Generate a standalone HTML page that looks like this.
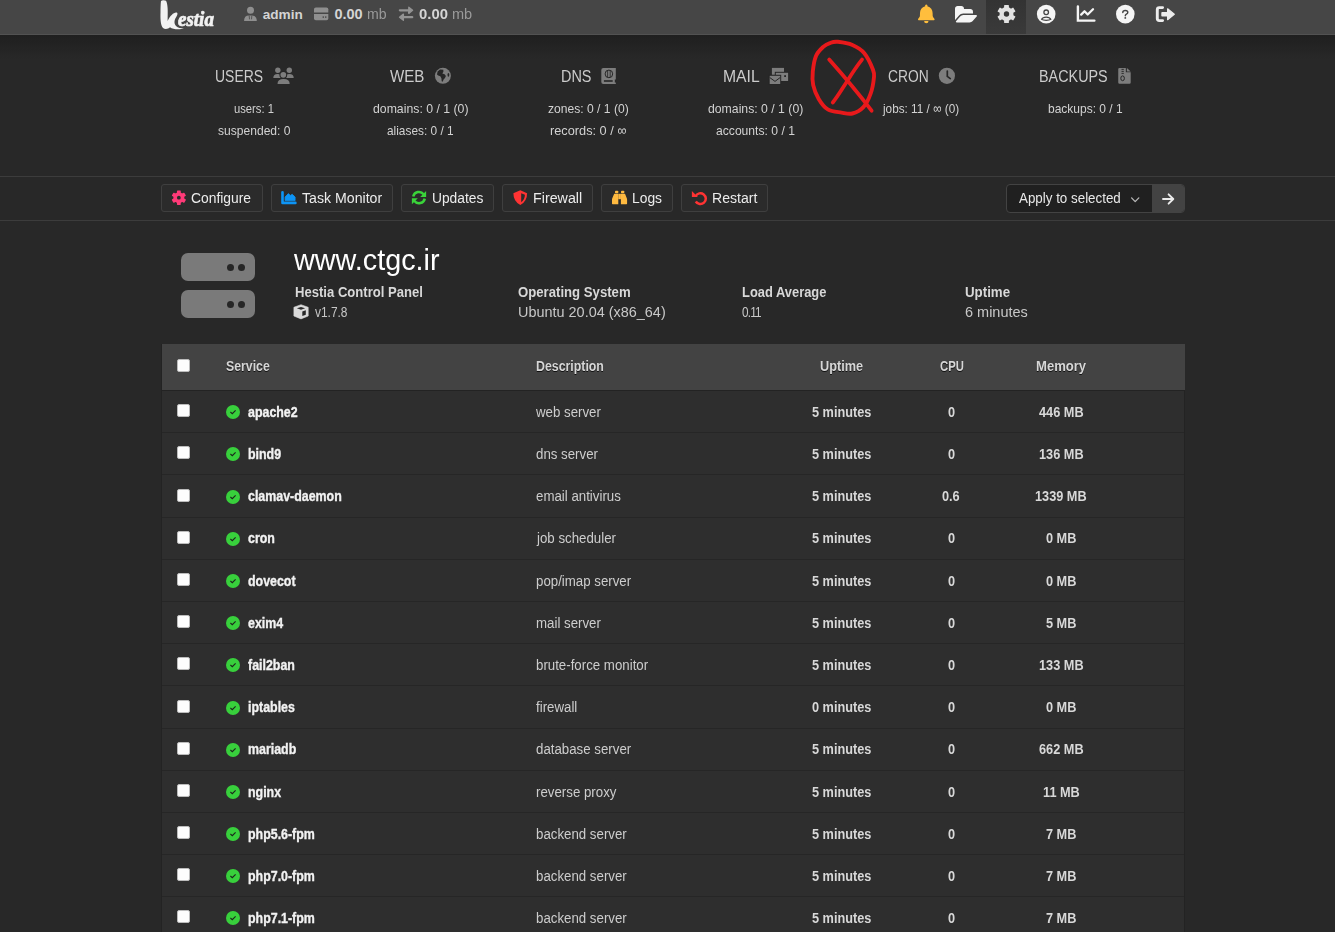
<!DOCTYPE html>
<html><head><meta charset="utf-8"><style>
*{box-sizing:border-box;margin:0;padding:0}
html,body{width:1335px;height:932px;overflow:hidden}
body{background:#282828;font-family:"Liberation Sans",sans-serif;position:relative}
.t{position:absolute;white-space:nowrap;line-height:1;transform-origin:0 0}
.ic{position:absolute;overflow:visible}
.b{position:absolute}
</style></head><body>
<div class="b" style="left:0;top:0;width:1335px;height:34px;background:#464646"></div>
<div class="b" style="left:0;top:34px;width:1335px;height:1px;background:#525252"></div>
<div class="b" style="left:0;top:35px;width:1335px;height:24px;background:linear-gradient(#1f1f1f,#282828)"></div>
<div class="b" style="left:986px;top:0;width:40px;height:34px;background:linear-gradient(#333,#3a3a3a)"></div>
<svg class="ic" style="left:0;top:0;width:240px;height:34px" viewBox="0 0 240 34"><path fill="#f2f2f2" d="M161,1 C162,0 165,0 166,0.8 C167.8,4 168,10 167.6,21 C170,16 173.5,12.5 176,12.5 C178,12.5 177.8,14.5 176.5,16.5 C174.5,19.5 173.5,23 176,26 C178,28 181,28.3 184,28.5 C180,29.7 173,29.7 170,27.3 C168,29.2 165,29.5 163,28 C160.5,25.5 160.3,18 160.5,12 C160.6,6 160.7,3 161,1 Z"/></svg>
<div class="t" style="left:178px;top:8.57px;font-size:20px;color:#f2f2f2;font-family:'Liberation Serif';font-style:italic;font-weight:bold;transform:scaleX(0.95);-webkit-text-stroke:0.7px #f2f2f2">estia</div>
<svg class="ic" style="left:0;top:0;width:300px;height:34px" viewBox="0 0 300 34"><circle cx="250.5" cy="10.2" r="3.5" fill="#8f8f8f"/><path d="M244.1 21 Q244.1 15.6 249 15.6 H252 Q256.8 15.6 256.8 21 Z" fill="#8f8f8f"/><path d="M249.2 15.6 L249.5 19.3 M251.8 15.6 L251.5 19.3" stroke="#464646" stroke-width="0.8"/></svg>
<div class="t" style="left:262.70px;top:7.69px;font-size:13.6px;color:#d4d4d4;font-weight:bold;">admin</div>
<div class="t" style="left:334.40px;top:6.73px;font-size:14.5px;color:#d4d4d4;font-weight:bold;">0.00</div>
<div class="t" style="left:367.40px;top:7.15px;font-size:14px;color:#9a9a9a;transform:scaleX(1.0079);">mb</div>
<svg class="ic" style="left:0;top:0;width:500px;height:34px" viewBox="0 0 500 34"><g fill="#939393" stroke="#939393" stroke-linejoin="round" stroke-linecap="round"><path d="M399.9 10.3 H409.5" stroke-width="2.3" fill="none"/><path d="M408.8 7.2 L412.6 10.3 L408.8 13.4 Z" stroke-width="1.3"/><path d="M403 17.2 H412.2" stroke-width="2.3" fill="none"/><path d="M403.4 14.1 L399.5 17.2 L403.4 20.3 Z" stroke-width="1.3"/></g></svg>
<div class="t" style="left:419.30px;top:6.73px;font-size:14.5px;color:#d4d4d4;font-weight:bold;transform:scaleX(1.0242);">0.00</div>
<div class="t" style="left:452.30px;top:7.15px;font-size:14px;color:#9a9a9a;transform:scaleX(1.0388);">mb</div>
<svg class="ic" style="left:0;top:0;width:1335px;height:34px" viewBox="0 0 1335 34"><path d="M926.3 4.6 C927.2 4.6 927.6 5.4 927.4 6.3 C930.8 7 932.6 9.8 932.6 13 L932.7 16.1 C932.9 17.5 934.3 18.4 934.6 19.2 C934.6 19.9 934.2 20.2 933.6 20.2 H919 C918.4 20.2 918 19.9 918 19.2 C918.3 18.4 919.7 17.5 919.9 16.1 L920 13 C920 9.8 921.8 7 925.2 6.3 C925 5.4 925.4 4.6 926.3 4.6 Z" fill="#ffbe3d"/><path d="M924.1 21.1 A2.2 2.2 0 0 0 928.5 21.1 Z" fill="#ffbe3d"/></svg>
<svg class="ic" style="left:955px;top:6px;width:22px;height:16.5px" viewBox="0 -1408 1879 1408" preserveAspectRatio="none"><path fill="#f5f5f5" transform="scale(1,-1)" d="M1879 584q0 -31 -31 -66l-336 -396q-43 -51 -120.5 -86.5t-143.5 -35.5h-1088q-34 0 -60.5 13t-26.5 43q0 31 31 66l336 396q43 51 120.5 86.5t143.5 35.5h1088q34 0 60.5 -13t26.5 -43zM1536 928v-160h-832q-94 0 -197 -47.5t-164 -119.5l-337 -396l-5 -6q0 4 -0.5 12.5
t-0.5 12.5v960q0 92 66 158t158 66h320q92 0 158 -66t66 -158v-32h544q92 0 158 -66t66 -158z"/></svg>
<svg class="ic" style="left:0;top:0;width:1335px;height:34px" viewBox="0 0 1335 34"><circle cx="1125.3" cy="14.1" r="9.3" fill="#f5f5f5"/><path d="M1122.8 12.4 Q1122.8 10.4 1125.3 10.4 Q1127.8 10.4 1127.8 12.2 Q1127.8 13.5 1126.4 14.2 Q1125.3 14.8 1125.3 15.8" fill="none" stroke="#464646" stroke-width="1.45" stroke-linecap="round"/><circle cx="1125.3" cy="17.9" r="0.95" fill="#464646"/></svg>
<svg class="ic" style="left:0;top:0;width:1335px;height:34px" viewBox="0 0 1335 34"><path d="M1162.6 7.6 H1159.3 Q1157.3 7.6 1157.3 9.6 V18.6 Q1157.3 20.6 1159.3 20.6 H1162.6" fill="none" stroke="#ececec" stroke-width="2.9" stroke-linecap="round"/><rect x="1161.3" y="12.1" width="6.5" height="4.4" rx="0.8" fill="#ececec"/><path d="M1167.6 8.8 L1174.3 14.3 L1167.6 19.7 Z" fill="#ececec" stroke="#ececec" stroke-width="1.2" stroke-linejoin="round"/></svg>
<div class="t" style="left:215.00px;top:68.27px;font-size:17.4px;color:#cbcbcb;transform:scaleX(0.8024);">USERS</div>
<div class="t" style="left:234.30px;top:101.97px;font-size:13.5px;color:#d2d2d2;transform:scaleX(0.8309);">users: 1</div>
<div class="t" style="left:217.60px;top:123.87px;font-size:13.5px;color:#d2d2d2;transform:scaleX(0.8943);">suspended: 0</div>
<div class="t" style="left:390.00px;top:68.27px;font-size:17.4px;color:#cbcbcb;transform:scaleX(0.8679);">WEB</div>
<div class="t" style="left:372.70px;top:101.97px;font-size:13.5px;color:#d2d2d2;transform:scaleX(0.9091);">domains: 0 / 1 (0)</div>
<div class="t" style="left:387.00px;top:123.87px;font-size:13.5px;color:#d2d2d2;transform:scaleX(0.8788);">aliases: 0 / 1</div>
<div class="t" style="left:560.90px;top:68.27px;font-size:17.4px;color:#cbcbcb;transform:scaleX(0.8304);">DNS</div>
<div class="t" style="left:547.60px;top:101.97px;font-size:13.5px;color:#d2d2d2;transform:scaleX(0.8962);">zones: 0 / 1 (0)</div>
<div class="t" style="left:549.70px;top:123.87px;font-size:13.5px;color:#d2d2d2;transform:scaleX(0.9443);">records: 0 / ∞</div>
<div class="t" style="left:722.50px;top:68.27px;font-size:17.4px;color:#cbcbcb;transform:scaleX(0.9037);">MAIL</div>
<div class="t" style="left:707.70px;top:101.97px;font-size:13.5px;color:#d2d2d2;transform:scaleX(0.9072);">domains: 0 / 1 (0)</div>
<div class="t" style="left:715.90px;top:123.87px;font-size:13.5px;color:#d2d2d2;transform:scaleX(0.8986);">accounts: 0 / 1</div>
<div class="t" style="left:887.90px;top:68.27px;font-size:17.4px;color:#cbcbcb;transform:scaleX(0.7945);">CRON</div>
<div class="t" style="left:883.09px;top:101.97px;font-size:13.5px;color:#d2d2d2;transform:scaleX(0.8707);">jobs: 11 / ∞ (0)</div>
<div class="t" style="left:1039.40px;top:68.27px;font-size:17.4px;color:#cbcbcb;transform:scaleX(0.8262);">BACKUPS</div>
<div class="t" style="left:1047.60px;top:101.97px;font-size:13.5px;color:#d2d2d2;transform:scaleX(0.8887);">backups: 0 / 1</div>
<svg class="ic" style="left:0;top:0;width:1335px;height:932px" viewBox="0 0 1335 932"><path d="M837.8 41.8 C841.4 42.2 848.0 43.1 852.4 45.0 C856.8 46.9 860.9 49.1 864.3 53.2 C867.7 57.3 871.4 65.6 873.0 69.7 C874.6 73.8 874.3 74.0 873.9 77.9 C873.5 81.9 872.5 88.5 870.7 93.4 C869.0 98.3 866.5 103.8 863.4 107.1 C860.3 110.4 856.0 112.6 852.4 113.5 C848.8 114.4 845.6 113.3 841.5 112.6 C837.4 111.9 831.6 111.7 827.8 109.4 C824.0 107.1 821.1 102.9 818.7 98.9 C816.3 94.9 814.2 89.8 813.2 85.2 C812.2 80.6 812.3 76.4 812.8 71.5 C813.3 66.6 814.3 60.1 816.0 56.0 C817.7 51.9 820.8 49.1 823.2 46.9 C825.6 44.7 828.1 43.6 830.5 42.8 C832.9 41.9 834.1 41.4 837.8 41.8 Z" fill="none" stroke="#e8191b" stroke-width="3.9" stroke-linecap="round" stroke-linejoin="round"/><path d="M829.2 59.6 C842 74 858 93 871.6 110.7" fill="none" stroke="#e8191b" stroke-width="3.8" stroke-linecap="round"/><path d="M862 59.6 C856 67 851 75 847 81.5 C842 89 838 96 832.8 102.5" fill="none" stroke="#e8191b" stroke-width="3.8" stroke-linecap="round"/></svg>
<div class="b" style="left:0;top:176px;width:1335px;height:1px;background:#3c3c3c"></div>
<div class="b" style="left:0;top:220px;width:1335px;height:1px;background:#3c3c3c"></div>
<div class="b" style="left:161px;top:184px;width:102px;height:28px;border:1px solid #3f3f3f;border-radius:3px;background:#2b2b2b"></div>
<div class="t" style="left:191.20px;top:189.93px;font-size:15.2px;color:#ececec;transform:scaleX(0.9119);">Configure</div>
<div class="b" style="left:271px;top:184px;width:122px;height:28px;border:1px solid #3f3f3f;border-radius:3px;background:#2b2b2b"></div>
<div class="t" style="left:301.80px;top:189.93px;font-size:15.2px;color:#ececec;transform:scaleX(0.9309);">Task Monitor</div>
<div class="b" style="left:401px;top:184px;width:93px;height:28px;border:1px solid #3f3f3f;border-radius:3px;background:#2b2b2b"></div>
<div class="t" style="left:431.70px;top:189.93px;font-size:15.2px;color:#ececec;transform:scaleX(0.9078);">Updates</div>
<div class="b" style="left:502px;top:184px;width:91px;height:28px;border:1px solid #3f3f3f;border-radius:3px;background:#2b2b2b"></div>
<div class="t" style="left:533.00px;top:189.93px;font-size:15.2px;color:#ececec;transform:scaleX(0.9396);">Firewall</div>
<div class="b" style="left:601px;top:184px;width:72px;height:28px;border:1px solid #3f3f3f;border-radius:3px;background:#2b2b2b"></div>
<div class="t" style="left:632.00px;top:189.93px;font-size:15.2px;color:#ececec;transform:scaleX(0.9104);">Logs</div>
<div class="b" style="left:681px;top:184px;width:87px;height:28px;border:1px solid #3f3f3f;border-radius:3px;background:#2b2b2b"></div>
<div class="t" style="left:711.50px;top:189.93px;font-size:15.2px;color:#ececec;transform:scaleX(0.9267);">Restart</div>
<div class="b" style="left:1006px;top:184px;width:179px;height:29px;border:1px solid #434343;border-radius:4px;background:#202020"></div>
<div class="b" style="left:1152px;top:185px;width:32px;height:27px;border-radius:0 3px 3px 0;background:#434343"></div>
<div class="t" style="left:1019.20px;top:191.03px;font-size:14.5px;color:#e8e8e8;transform:scaleX(0.9218);">Apply to selected</div>
<svg class="ic" style="left:0;top:0;width:1335px;height:932px" viewBox="0 0 1335 932"><path d="M1131.6 197.9 L1135.2 201.6 L1138.8 197.9" fill="none" stroke="#b8b8b8" stroke-width="1.3" stroke-linecap="round" stroke-linejoin="round"/><path d="M1163 199 H1173.2 M1168.6 194.3 L1173.3 199 L1168.6 203.7" fill="none" stroke="#ececec" stroke-width="1.9" stroke-linecap="round" stroke-linejoin="round"/></svg>
<div class="b" style="left:180.5px;top:253px;width:74px;height:27.5px;border-radius:7px;background:#7a7a7a"></div>
<div class="b" style="left:226.5px;top:263.5px;width:7px;height:7px;border-radius:50%;background:#262626"></div>
<div class="b" style="left:237.5px;top:263.5px;width:7px;height:7px;border-radius:50%;background:#262626"></div>
<div class="b" style="left:180.5px;top:290px;width:74px;height:27.5px;border-radius:7px;background:#7a7a7a"></div>
<div class="b" style="left:226.5px;top:300.5px;width:7px;height:7px;border-radius:50%;background:#262626"></div>
<div class="b" style="left:237.5px;top:300.5px;width:7px;height:7px;border-radius:50%;background:#262626"></div>
<div class="t" style="left:294.26px;top:245.75px;font-size:29px;color:#ffffff;transform:scaleX(0.9926);">www.ctgc.ir</div>
<div class="t" style="left:294.80px;top:285.35px;font-size:14px;color:#d8d8d8;font-weight:bold;transform:scaleX(0.9341);">Hestia Control Panel</div>
<svg class="ic" style="left:0;top:0;width:400px;height:340px" viewBox="0 0 400 340"><path d="M301 304.7 L308.2 307.3 V316 L301 318.9 L293.9 316 V307.3 Z" fill="#dadada" stroke="#dadada" stroke-width="0.6" stroke-linejoin="round"/><path d="M296.9 308.3 L301 306.9 L305.1 308.3 L301 309.7 Z" fill="#282828"/><path d="M302.3 311.5 L305.8 310.2 V314.7 L302.3 316 Z" fill="#282828"/></svg>
<div class="t" style="left:314.70px;top:304.65px;font-size:14px;color:#c8c8c8;transform:scaleX(0.8522);">v1.7.8</div>
<div class="t" style="left:517.70px;top:285.35px;font-size:14px;color:#d8d8d8;font-weight:bold;transform:scaleX(0.9398);">Operating System</div>
<div class="t" style="left:517.70px;top:306.03px;font-size:13.9px;color:#c8c8c8;transform:scaleX(1.0394);">Ubuntu 20.04 (x86_64)</div>
<div class="t" style="left:741.50px;top:285.35px;font-size:14px;color:#d8d8d8;font-weight:bold;transform:scaleX(0.9219);">Load Average</div>
<div class="t" style="left:741.50px;top:305.05px;font-size:14px;color:#c8c8c8;transform:scaleX(0.8400);letter-spacing:-1px;">0.11</div>
<div class="t" style="left:964.90px;top:285.35px;font-size:14px;color:#d8d8d8;font-weight:bold;transform:scaleX(0.9506);">Uptime</div>
<div class="t" style="left:964.90px;top:306.03px;font-size:13.9px;color:#c8c8c8;transform:scaleX(1.0422);">6 minutes</div>
<div class="b" style="left:161px;top:343.5px;width:1024px;height:600px;background:#232323"></div>
<div class="b" style="left:162px;top:391px;width:1022px;height:600px;background:#2e2e2e"></div>
<div class="b" style="left:161.5px;top:343.5px;width:1023px;height:46.5px;background:#434343"></div>
<div class="b" style="left:177px;top:359.2px;width:12.5px;height:12.5px;border-radius:2px;background:#fdfdfd;border:1px solid #bcbcbc"></div>
<div class="t" style="left:226.40px;top:358.83px;font-size:14.5px;color:#d6d6d6;font-weight:bold;transform:scaleX(0.8487);text-shadow:0 1px 0 rgba(0,0,0,0.75);">Service</div>
<div class="t" style="left:536.30px;top:358.83px;font-size:14.5px;color:#d6d6d6;font-weight:bold;transform:scaleX(0.8513);text-shadow:0 1px 0 rgba(0,0,0,0.75);">Description</div>
<div class="t" style="left:819.85px;top:358.83px;font-size:14.5px;color:#d6d6d6;font-weight:bold;transform:scaleX(0.8771);text-shadow:0 1px 0 rgba(0,0,0,0.75);">Uptime</div>
<div class="t" style="left:939.80px;top:358.83px;font-size:14.5px;color:#d6d6d6;font-weight:bold;transform:scaleX(0.7775);text-shadow:0 1px 0 rgba(0,0,0,0.75);">CPU</div>
<div class="t" style="left:1036.45px;top:358.83px;font-size:14.5px;color:#d6d6d6;font-weight:bold;transform:scaleX(0.9012);text-shadow:0 1px 0 rgba(0,0,0,0.75);">Memory</div>
<div class="b" style="left:177px;top:404px;width:12.5px;height:12.5px;border-radius:2px;background:#fdfdfd;border:1px solid #bcbcbc"></div>
<div class="b" style="left:226px;top:405.20px;width:14px;height:14px;border-radius:50%;background:#38d03c"></div>
<svg class="ic" style="left:226px;top:405.20px;width:14px;height:14px" viewBox="0 0 14 14"><path d="M4.4 7.0 L6.3 8.7 L9.6 5.3" fill="none" stroke="#1c261c" stroke-width="1.1"/></svg>
<div class="t" style="left:247.70px;top:404.81px;font-size:14.4px;color:#f2f2f2;font-weight:bold;transform:scaleX(0.8620);-webkit-text-stroke:0.35px #f2f2f2;">apache2</div>
<div class="t" style="left:536.33px;top:405.72px;font-size:13.8px;color:#cdcdcd;transform:scaleX(0.9620);">web server</div>
<div class="t" style="left:811.66px;top:404.81px;font-size:14.4px;color:#d8d8d8;font-weight:bold;transform:scaleX(0.8850);">5 minutes</div>
<div class="t" style="left:947.76px;top:404.81px;font-size:14.4px;color:#d8d8d8;font-weight:bold;transform:scaleX(0.8850);">0</div>
<div class="t" style="left:1038.89px;top:404.81px;font-size:14.4px;color:#d8d8d8;font-weight:bold;transform:scaleX(0.8850);">446 MB</div>
<div class="b" style="left:162px;top:432.19px;width:1022px;height:1px;background:#262626"></div>
<div class="b" style="left:177px;top:446px;width:12.5px;height:12.5px;border-radius:2px;background:#fdfdfd;border:1px solid #bcbcbc"></div>
<div class="b" style="left:226px;top:447.39px;width:14px;height:14px;border-radius:50%;background:#38d03c"></div>
<svg class="ic" style="left:226px;top:447.39px;width:14px;height:14px" viewBox="0 0 14 14"><path d="M4.4 7.0 L6.3 8.7 L9.6 5.3" fill="none" stroke="#1c261c" stroke-width="1.1"/></svg>
<div class="t" style="left:247.70px;top:446.81px;font-size:14.4px;color:#f2f2f2;font-weight:bold;transform:scaleX(0.8620);-webkit-text-stroke:0.35px #f2f2f2;">bind9</div>
<div class="t" style="left:536.30px;top:447.72px;font-size:13.8px;color:#cdcdcd;transform:scaleX(0.9620);">dns server</div>
<div class="t" style="left:811.66px;top:446.81px;font-size:14.4px;color:#d8d8d8;font-weight:bold;transform:scaleX(0.8850);">5 minutes</div>
<div class="t" style="left:947.76px;top:446.81px;font-size:14.4px;color:#d8d8d8;font-weight:bold;transform:scaleX(0.8850);">0</div>
<div class="t" style="left:1038.89px;top:446.81px;font-size:14.4px;color:#d8d8d8;font-weight:bold;transform:scaleX(0.8850);">136 MB</div>
<div class="b" style="left:162px;top:474.38px;width:1022px;height:1px;background:#262626"></div>
<div class="b" style="left:177px;top:489px;width:12.5px;height:12.5px;border-radius:2px;background:#fdfdfd;border:1px solid #bcbcbc"></div>
<div class="b" style="left:226px;top:489.58px;width:14px;height:14px;border-radius:50%;background:#38d03c"></div>
<svg class="ic" style="left:226px;top:489.58px;width:14px;height:14px" viewBox="0 0 14 14"><path d="M4.4 7.0 L6.3 8.7 L9.6 5.3" fill="none" stroke="#1c261c" stroke-width="1.1"/></svg>
<div class="t" style="left:247.70px;top:488.81px;font-size:14.4px;color:#f2f2f2;font-weight:bold;transform:scaleX(0.8620);-webkit-text-stroke:0.35px #f2f2f2;">clamav-daemon</div>
<div class="t" style="left:536.30px;top:489.72px;font-size:13.8px;color:#cdcdcd;transform:scaleX(0.9620);">email antivirus</div>
<div class="t" style="left:811.66px;top:488.81px;font-size:14.4px;color:#d8d8d8;font-weight:bold;transform:scaleX(0.8850);">5 minutes</div>
<div class="t" style="left:942.44px;top:488.81px;font-size:14.4px;color:#d8d8d8;font-weight:bold;transform:scaleX(0.8850);">0.6</div>
<div class="t" style="left:1035.34px;top:488.81px;font-size:14.4px;color:#d8d8d8;font-weight:bold;transform:scaleX(0.8850);">1339 MB</div>
<div class="b" style="left:162px;top:516.57px;width:1022px;height:1px;background:#262626"></div>
<div class="b" style="left:177px;top:531px;width:12.5px;height:12.5px;border-radius:2px;background:#fdfdfd;border:1px solid #bcbcbc"></div>
<div class="b" style="left:226px;top:531.77px;width:14px;height:14px;border-radius:50%;background:#38d03c"></div>
<svg class="ic" style="left:226px;top:531.77px;width:14px;height:14px" viewBox="0 0 14 14"><path d="M4.4 7.0 L6.3 8.7 L9.6 5.3" fill="none" stroke="#1c261c" stroke-width="1.1"/></svg>
<div class="t" style="left:247.70px;top:530.81px;font-size:14.4px;color:#f2f2f2;font-weight:bold;transform:scaleX(0.8620);-webkit-text-stroke:0.35px #f2f2f2;">cron</div>
<div class="t" style="left:536.63px;top:531.72px;font-size:13.8px;color:#cdcdcd;transform:scaleX(0.9620);">job scheduler</div>
<div class="t" style="left:811.66px;top:530.81px;font-size:14.4px;color:#d8d8d8;font-weight:bold;transform:scaleX(0.8850);">5 minutes</div>
<div class="t" style="left:947.76px;top:530.81px;font-size:14.4px;color:#d8d8d8;font-weight:bold;transform:scaleX(0.8850);">0</div>
<div class="t" style="left:1045.98px;top:530.81px;font-size:14.4px;color:#d8d8d8;font-weight:bold;transform:scaleX(0.8850);">0 MB</div>
<div class="b" style="left:162px;top:558.76px;width:1022px;height:1px;background:#262626"></div>
<div class="b" style="left:177px;top:573px;width:12.5px;height:12.5px;border-radius:2px;background:#fdfdfd;border:1px solid #bcbcbc"></div>
<div class="b" style="left:226px;top:573.96px;width:14px;height:14px;border-radius:50%;background:#38d03c"></div>
<svg class="ic" style="left:226px;top:573.96px;width:14px;height:14px" viewBox="0 0 14 14"><path d="M4.4 7.0 L6.3 8.7 L9.6 5.3" fill="none" stroke="#1c261c" stroke-width="1.1"/></svg>
<div class="t" style="left:247.70px;top:573.81px;font-size:14.4px;color:#f2f2f2;font-weight:bold;transform:scaleX(0.8620);-webkit-text-stroke:0.35px #f2f2f2;">dovecot</div>
<div class="t" style="left:536.30px;top:574.72px;font-size:13.8px;color:#cdcdcd;transform:scaleX(0.9620);">pop/imap server</div>
<div class="t" style="left:811.66px;top:573.81px;font-size:14.4px;color:#d8d8d8;font-weight:bold;transform:scaleX(0.8850);">5 minutes</div>
<div class="t" style="left:947.76px;top:573.81px;font-size:14.4px;color:#d8d8d8;font-weight:bold;transform:scaleX(0.8850);">0</div>
<div class="t" style="left:1045.98px;top:573.81px;font-size:14.4px;color:#d8d8d8;font-weight:bold;transform:scaleX(0.8850);">0 MB</div>
<div class="b" style="left:162px;top:600.95px;width:1022px;height:1px;background:#262626"></div>
<div class="b" style="left:177px;top:615px;width:12.5px;height:12.5px;border-radius:2px;background:#fdfdfd;border:1px solid #bcbcbc"></div>
<div class="b" style="left:226px;top:616.15px;width:14px;height:14px;border-radius:50%;background:#38d03c"></div>
<svg class="ic" style="left:226px;top:616.15px;width:14px;height:14px" viewBox="0 0 14 14"><path d="M4.4 7.0 L6.3 8.7 L9.6 5.3" fill="none" stroke="#1c261c" stroke-width="1.1"/></svg>
<div class="t" style="left:247.70px;top:615.81px;font-size:14.4px;color:#f2f2f2;font-weight:bold;transform:scaleX(0.8620);-webkit-text-stroke:0.35px #f2f2f2;">exim4</div>
<div class="t" style="left:536.30px;top:616.72px;font-size:13.8px;color:#cdcdcd;transform:scaleX(0.9620);">mail server</div>
<div class="t" style="left:811.66px;top:615.81px;font-size:14.4px;color:#d8d8d8;font-weight:bold;transform:scaleX(0.8850);">5 minutes</div>
<div class="t" style="left:947.76px;top:615.81px;font-size:14.4px;color:#d8d8d8;font-weight:bold;transform:scaleX(0.8850);">0</div>
<div class="t" style="left:1045.98px;top:615.81px;font-size:14.4px;color:#d8d8d8;font-weight:bold;transform:scaleX(0.8850);">5 MB</div>
<div class="b" style="left:162px;top:643.14px;width:1022px;height:1px;background:#262626"></div>
<div class="b" style="left:177px;top:657px;width:12.5px;height:12.5px;border-radius:2px;background:#fdfdfd;border:1px solid #bcbcbc"></div>
<div class="b" style="left:226px;top:658.34px;width:14px;height:14px;border-radius:50%;background:#38d03c"></div>
<svg class="ic" style="left:226px;top:658.34px;width:14px;height:14px" viewBox="0 0 14 14"><path d="M4.4 7.0 L6.3 8.7 L9.6 5.3" fill="none" stroke="#1c261c" stroke-width="1.1"/></svg>
<div class="t" style="left:247.70px;top:657.81px;font-size:14.4px;color:#f2f2f2;font-weight:bold;transform:scaleX(0.8620);-webkit-text-stroke:0.35px #f2f2f2;">fail2ban</div>
<div class="t" style="left:536.30px;top:658.72px;font-size:13.8px;color:#cdcdcd;transform:scaleX(0.9620);">brute-force monitor</div>
<div class="t" style="left:811.66px;top:657.81px;font-size:14.4px;color:#d8d8d8;font-weight:bold;transform:scaleX(0.8850);">5 minutes</div>
<div class="t" style="left:947.76px;top:657.81px;font-size:14.4px;color:#d8d8d8;font-weight:bold;transform:scaleX(0.8850);">0</div>
<div class="t" style="left:1038.89px;top:657.81px;font-size:14.4px;color:#d8d8d8;font-weight:bold;transform:scaleX(0.8850);">133 MB</div>
<div class="b" style="left:162px;top:685.33px;width:1022px;height:1px;background:#262626"></div>
<div class="b" style="left:177px;top:700px;width:12.5px;height:12.5px;border-radius:2px;background:#fdfdfd;border:1px solid #bcbcbc"></div>
<div class="b" style="left:226px;top:700.53px;width:14px;height:14px;border-radius:50%;background:#38d03c"></div>
<svg class="ic" style="left:226px;top:700.53px;width:14px;height:14px" viewBox="0 0 14 14"><path d="M4.4 7.0 L6.3 8.7 L9.6 5.3" fill="none" stroke="#1c261c" stroke-width="1.1"/></svg>
<div class="t" style="left:247.70px;top:699.81px;font-size:14.4px;color:#f2f2f2;font-weight:bold;transform:scaleX(0.8620);-webkit-text-stroke:0.35px #f2f2f2;">iptables</div>
<div class="t" style="left:536.30px;top:700.72px;font-size:13.8px;color:#cdcdcd;transform:scaleX(0.9620);">firewall</div>
<div class="t" style="left:811.66px;top:699.81px;font-size:14.4px;color:#d8d8d8;font-weight:bold;transform:scaleX(0.8850);">0 minutes</div>
<div class="t" style="left:947.76px;top:699.81px;font-size:14.4px;color:#d8d8d8;font-weight:bold;transform:scaleX(0.8850);">0</div>
<div class="t" style="left:1045.98px;top:699.81px;font-size:14.4px;color:#d8d8d8;font-weight:bold;transform:scaleX(0.8850);">0 MB</div>
<div class="b" style="left:162px;top:727.52px;width:1022px;height:1px;background:#262626"></div>
<div class="b" style="left:177px;top:742px;width:12.5px;height:12.5px;border-radius:2px;background:#fdfdfd;border:1px solid #bcbcbc"></div>
<div class="b" style="left:226px;top:742.72px;width:14px;height:14px;border-radius:50%;background:#38d03c"></div>
<svg class="ic" style="left:226px;top:742.72px;width:14px;height:14px" viewBox="0 0 14 14"><path d="M4.4 7.0 L6.3 8.7 L9.6 5.3" fill="none" stroke="#1c261c" stroke-width="1.1"/></svg>
<div class="t" style="left:247.70px;top:741.81px;font-size:14.4px;color:#f2f2f2;font-weight:bold;transform:scaleX(0.8620);-webkit-text-stroke:0.35px #f2f2f2;">mariadb</div>
<div class="t" style="left:536.30px;top:742.72px;font-size:13.8px;color:#cdcdcd;transform:scaleX(0.9620);">database server</div>
<div class="t" style="left:811.66px;top:741.81px;font-size:14.4px;color:#d8d8d8;font-weight:bold;transform:scaleX(0.8850);">5 minutes</div>
<div class="t" style="left:947.76px;top:741.81px;font-size:14.4px;color:#d8d8d8;font-weight:bold;transform:scaleX(0.8850);">0</div>
<div class="t" style="left:1038.89px;top:741.81px;font-size:14.4px;color:#d8d8d8;font-weight:bold;transform:scaleX(0.8850);">662 MB</div>
<div class="b" style="left:162px;top:769.71px;width:1022px;height:1px;background:#262626"></div>
<div class="b" style="left:177px;top:784px;width:12.5px;height:12.5px;border-radius:2px;background:#fdfdfd;border:1px solid #bcbcbc"></div>
<div class="b" style="left:226px;top:784.91px;width:14px;height:14px;border-radius:50%;background:#38d03c"></div>
<svg class="ic" style="left:226px;top:784.91px;width:14px;height:14px" viewBox="0 0 14 14"><path d="M4.4 7.0 L6.3 8.7 L9.6 5.3" fill="none" stroke="#1c261c" stroke-width="1.1"/></svg>
<div class="t" style="left:247.70px;top:784.81px;font-size:14.4px;color:#f2f2f2;font-weight:bold;transform:scaleX(0.8620);-webkit-text-stroke:0.35px #f2f2f2;">nginx</div>
<div class="t" style="left:536.30px;top:785.72px;font-size:13.8px;color:#cdcdcd;transform:scaleX(0.9620);">reverse proxy</div>
<div class="t" style="left:811.66px;top:784.81px;font-size:14.4px;color:#d8d8d8;font-weight:bold;transform:scaleX(0.8850);">5 minutes</div>
<div class="t" style="left:947.76px;top:784.81px;font-size:14.4px;color:#d8d8d8;font-weight:bold;transform:scaleX(0.8850);">0</div>
<div class="t" style="left:1042.78px;top:784.81px;font-size:14.4px;color:#d8d8d8;font-weight:bold;transform:scaleX(0.8850);">11 MB</div>
<div class="b" style="left:162px;top:811.90px;width:1022px;height:1px;background:#262626"></div>
<div class="b" style="left:177px;top:826px;width:12.5px;height:12.5px;border-radius:2px;background:#fdfdfd;border:1px solid #bcbcbc"></div>
<div class="b" style="left:226px;top:827.10px;width:14px;height:14px;border-radius:50%;background:#38d03c"></div>
<svg class="ic" style="left:226px;top:827.10px;width:14px;height:14px" viewBox="0 0 14 14"><path d="M4.4 7.0 L6.3 8.7 L9.6 5.3" fill="none" stroke="#1c261c" stroke-width="1.1"/></svg>
<div class="t" style="left:247.70px;top:826.81px;font-size:14.4px;color:#f2f2f2;font-weight:bold;transform:scaleX(0.8620);-webkit-text-stroke:0.35px #f2f2f2;">php5.6-fpm</div>
<div class="t" style="left:536.30px;top:827.72px;font-size:13.8px;color:#cdcdcd;transform:scaleX(0.9620);">backend server</div>
<div class="t" style="left:811.66px;top:826.81px;font-size:14.4px;color:#d8d8d8;font-weight:bold;transform:scaleX(0.8850);">5 minutes</div>
<div class="t" style="left:947.76px;top:826.81px;font-size:14.4px;color:#d8d8d8;font-weight:bold;transform:scaleX(0.8850);">0</div>
<div class="t" style="left:1045.98px;top:826.81px;font-size:14.4px;color:#d8d8d8;font-weight:bold;transform:scaleX(0.8850);">7 MB</div>
<div class="b" style="left:162px;top:854.09px;width:1022px;height:1px;background:#262626"></div>
<div class="b" style="left:177px;top:868px;width:12.5px;height:12.5px;border-radius:2px;background:#fdfdfd;border:1px solid #bcbcbc"></div>
<div class="b" style="left:226px;top:869.29px;width:14px;height:14px;border-radius:50%;background:#38d03c"></div>
<svg class="ic" style="left:226px;top:869.29px;width:14px;height:14px" viewBox="0 0 14 14"><path d="M4.4 7.0 L6.3 8.7 L9.6 5.3" fill="none" stroke="#1c261c" stroke-width="1.1"/></svg>
<div class="t" style="left:247.70px;top:868.81px;font-size:14.4px;color:#f2f2f2;font-weight:bold;transform:scaleX(0.8620);-webkit-text-stroke:0.35px #f2f2f2;">php7.0-fpm</div>
<div class="t" style="left:536.30px;top:869.72px;font-size:13.8px;color:#cdcdcd;transform:scaleX(0.9620);">backend server</div>
<div class="t" style="left:811.66px;top:868.81px;font-size:14.4px;color:#d8d8d8;font-weight:bold;transform:scaleX(0.8850);">5 minutes</div>
<div class="t" style="left:947.76px;top:868.81px;font-size:14.4px;color:#d8d8d8;font-weight:bold;transform:scaleX(0.8850);">0</div>
<div class="t" style="left:1045.98px;top:868.81px;font-size:14.4px;color:#d8d8d8;font-weight:bold;transform:scaleX(0.8850);">7 MB</div>
<div class="b" style="left:162px;top:896.28px;width:1022px;height:1px;background:#262626"></div>
<div class="b" style="left:177px;top:910px;width:12.5px;height:12.5px;border-radius:2px;background:#fdfdfd;border:1px solid #bcbcbc"></div>
<div class="b" style="left:226px;top:911.48px;width:14px;height:14px;border-radius:50%;background:#38d03c"></div>
<svg class="ic" style="left:226px;top:911.48px;width:14px;height:14px" viewBox="0 0 14 14"><path d="M4.4 7.0 L6.3 8.7 L9.6 5.3" fill="none" stroke="#1c261c" stroke-width="1.1"/></svg>
<div class="t" style="left:247.70px;top:910.81px;font-size:14.4px;color:#f2f2f2;font-weight:bold;transform:scaleX(0.8620);-webkit-text-stroke:0.35px #f2f2f2;">php7.1-fpm</div>
<div class="t" style="left:536.30px;top:911.72px;font-size:13.8px;color:#cdcdcd;transform:scaleX(0.9620);">backend server</div>
<div class="t" style="left:811.66px;top:910.81px;font-size:14.4px;color:#d8d8d8;font-weight:bold;transform:scaleX(0.8850);">5 minutes</div>
<div class="t" style="left:947.76px;top:910.81px;font-size:14.4px;color:#d8d8d8;font-weight:bold;transform:scaleX(0.8850);">0</div>
<div class="t" style="left:1045.98px;top:910.81px;font-size:14.4px;color:#d8d8d8;font-weight:bold;transform:scaleX(0.8850);">7 MB</div>
<svg class="ic" style="left:0;top:0;width:1335px;height:932px" viewBox="0 0 1335 932">
<mask id="gm1"><rect x="995.4" y="2.9000000000000004" width="22.2" height="22.2" fill="#fff"/><circle cx="1006.5" cy="14.0" r="2.7" fill="#000"/></mask><g mask="url(#gm1)" fill="#e2e2e2"><circle cx="1006.5" cy="14.0" r="7.0"/><rect x="1004.1" y="4.9" width="4.8" height="18.2" rx="0.6" transform="rotate(0 1006.5 14.0)"/><rect x="1004.1" y="4.9" width="4.8" height="18.2" rx="0.6" transform="rotate(60 1006.5 14.0)"/><rect x="1004.1" y="4.9" width="4.8" height="18.2" rx="0.6" transform="rotate(120 1006.5 14.0)"/></g>
<circle cx="1046.2" cy="14.1" r="9.3" fill="#f5f5f5"/>
<circle cx="1046.2" cy="12.3" r="2.3" fill="none" stroke="#464646" stroke-width="1.3"/>
<path d="M1041.6 19.3 C1042.5 17.4 1044 17.1 1046.2 17.1 C1048.4 17.1 1049.9 17.4 1050.8 19.3 C1049.9 20 1048 20.3 1046.2 20.3 C1044.4 20.3 1042.5 20 1041.6 19.3 Z" fill="none" stroke="#464646" stroke-width="1.2"/>
<path d="M1077.9 6.5 V20.6 H1094.4" fill="none" stroke="#f5f5f5" stroke-width="2.4" stroke-linecap="round"/>
<path d="M1081.2 14.6 L1084.5 11.3 L1087.7 14.5 L1093 9.3" fill="none" stroke="#f5f5f5" stroke-width="2.3" stroke-linecap="round" stroke-linejoin="round"/>
<circle cx="277.85" cy="70.3" r="2.7" fill="#7d7d7d"/><circle cx="289.3" cy="70.3" r="2.7" fill="#7d7d7d"/>
<path d="M273.3 78 Q273.3 73.9 277.6 73.9 Q281.9 73.9 281.9 78 Z" fill="#7d7d7d"/>
<path d="M285.1 78 Q285.1 73.9 289.4 73.9 Q293.7 73.9 293.7 78 Z" fill="#7d7d7d"/>
<circle cx="283.3" cy="74.8" r="3.9" fill="#262626"/><rect x="273" y="78" width="21" height="0.9" fill="#262626"/>
<circle cx="283.3" cy="74.8" r="2.85" fill="#7d7d7d"/>
<path d="M277.5 84 Q277.5 78.9 283.6 78.9 Q289.7 78.9 289.7 84 Z" fill="#7d7d7d"/>
<circle cx="442.9" cy="75.8" r="8" fill="#7d7d7d"/>
<path d="M437 74.6 L437.6 71.5 L440 69.6 L443.3 69.7 L443.4 71.8 L442.3 73.6 L444.6 74.3 L445.9 75.9 L445 78 L443.6 79.4 L442.7 81.7 L441.7 81.3 L441.4 78.2 L440.3 76.2 L438.2 75.5 Z" fill="#262626"/>
<ellipse cx="448.4" cy="74.8" rx="0.9" ry="1.9" fill="#262626"/>
<path d="M603.3 67.9 H615.8 V84 H603.3 Q601.3 84 601.3 82 V69.9 Q601.3 67.9 603.3 67.9 Z" fill="#7d7d7d"/>
<circle cx="608.9" cy="73.9" r="3.8" fill="none" stroke="#262626" stroke-width="1"/>
<path d="M607.6 70.5 V77.3 M610.2 70.5 V77.3" stroke="#262626" stroke-width="0.8"/>
<rect x="603.9" y="80.2" width="8.8" height="1.6" fill="#262626"/><rect x="614.8" y="79.5" width="1.2" height="3" fill="#262626"/>
<rect x="771.9" y="67.9" width="12.1" height="7" fill="#7d7d7d"/>
<rect x="774.8" y="71.8" width="14.3" height="10.2" fill="#262626"/>
<rect x="775.8" y="72.8" width="12.3" height="8.2" fill="#7d7d7d"/>
<rect x="784.2" y="75.2" width="1.8" height="1.8" fill="#262626"/>
<rect x="768.7" y="74.8" width="12.5" height="10.2" fill="#262626"/>
<rect x="769.7" y="75.8" width="10.5" height="8.2" fill="#7d7d7d"/>
<path d="M769.7 77.5 L775 81.4 L780.2 77.5" fill="none" stroke="#262626" stroke-width="1"/>
<circle cx="946.9" cy="75.8" r="8.1" fill="#7d7d7d"/>
<path d="M947.3 71 V76.4 L950.3 78.6" fill="none" stroke="#262626" stroke-width="1.7" stroke-linecap="round" stroke-linejoin="round"/>
<path d="M1119.5 67.9 H1125.85 V72.2 H1130.7 V82.6 Q1130.7 83.8 1129.5 83.8 H1119.5 Q1118.25 83.8 1118.25 82.6 V69.1 Q1118.25 67.9 1119.5 67.9 Z" fill="#7d7d7d"/>
<path d="M1126.9 67.9 L1130.7 71.4 H1126.9 Z" fill="#7d7d7d"/>
<path d="M1121.5 69.4 H1123.8 M1121.5 71.4 H1123.8 M1121.5 73.4 H1123.8" stroke="#262626" stroke-width="0.9"/>
<ellipse cx="1122.6" cy="78.3" rx="1.8" ry="2.4" fill="none" stroke="#262626" stroke-width="1"/>
<mask id="gm2"><rect x="169.65" y="188.5" width="18.4" height="18.4" fill="#fff"/><circle cx="178.85" cy="197.7" r="1.9" fill="#000"/></mask><g mask="url(#gm2)" fill="#ff3a78"><circle cx="178.85" cy="197.7" r="5.5"/><rect x="176.95" y="190.5" width="3.8" height="14.4" rx="0.6" transform="rotate(0 178.85 197.7)"/><rect x="176.95" y="190.5" width="3.8" height="14.4" rx="0.6" transform="rotate(60 178.85 197.7)"/><rect x="176.95" y="190.5" width="3.8" height="14.4" rx="0.6" transform="rotate(120 178.85 197.7)"/></g>
<path d="M282.5 192.2 V202.9 H295.4" fill="none" stroke="#0d94f5" stroke-width="2.6" stroke-linecap="round" stroke-linejoin="round"/>
<path d="M285.1 200.6 V197 L288.4 193.6 L290.3 195.5 L292.2 194.3 L295.1 197 V200.6 Z" fill="#0d94f5" stroke="#0d94f5" stroke-width="0.8" stroke-linejoin="round"/>
<path d="M413.2 196.5 A5.9 5.9 0 0 1 423.6 194.2" fill="none" stroke="#3ad43a" stroke-width="2.5"/>
<path d="M426.1 191 V196.9 H420.2 Z" fill="#3ad43a"/>
<path d="M424.8 198.6 A5.9 5.9 0 0 1 414.4 200.9" fill="none" stroke="#3ad43a" stroke-width="2.5"/>
<path d="M411.9 204.2 V198.3 H417.8 Z" fill="#3ad43a"/>
<path d="M520.3 190.3 L527.1 193.3 Q527.1 201.5 520.3 205.1 Q513.4 201.5 513.4 193.3 Z" fill="#ff3333"/>
<path d="M521.2 193.2 L524.9 194.8 Q524.7 199.8 521.2 202.3 Z" fill="#2b2b2b"/>
<rect x="615" y="190.7" width="3.3" height="2.6" rx="0.8" fill="#ffba40"/><rect x="621" y="190.7" width="3.3" height="2.6" rx="0.8" fill="#ffba40"/>
<path d="M614.2 193.8 H618.3 V204.2 H612.6 Q612 204.2 612 203.4 V199.5 Q612 198.5 612.8 197 Z" fill="#ffba40"/>
<path d="M625 193.8 H620.9 V204.2 H626.5 Q627.1 204.2 627.1 203.4 V199.5 Q627.1 198.5 626.3 197 Z" fill="#ffba40"/>
<rect x="618.3" y="193.8" width="2.6" height="5.4" fill="#ffba40"/>
<path d="M695.6 196.2 A5.4 5.4 0 1 1 695.8 201.5" fill="none" stroke="#ff3333" stroke-width="2.5"/>
<path d="M691.9 190.9 V197.1 H697.9 Z" fill="#ff3333"/>
<path d="M315.8 7.4 H326.5 Q328.3 7.4 328.3 9.2 V12.6 H314 V9.2 Q314 7.4 315.8 7.4 Z" fill="#8f8f8f"/>
<path d="M314 14 H328.3 V18.4 Q328.3 20.2 326.5 20.2 H315.8 Q314 20.2 314 18.4 Z" fill="#8f8f8f"/>
<rect x="322.6" y="16.4" width="1.4" height="1.4" fill="#464646"/><rect x="325" y="16.4" width="1.4" height="1.4" fill="#464646"/>
</svg>
</body></html>
